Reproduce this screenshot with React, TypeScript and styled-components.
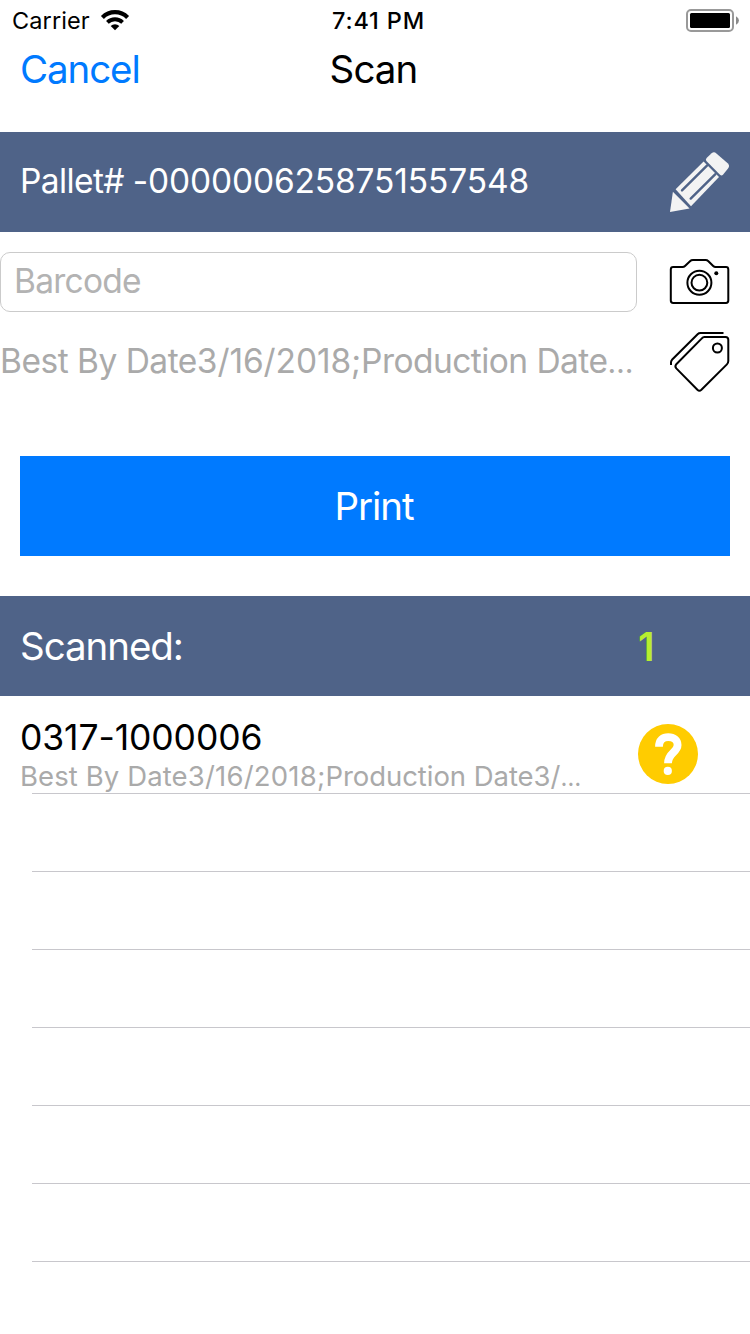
import React from "react";
import styled, { createGlobalStyle } from "styled-components";

const GlobalStyle = createGlobalStyle`
  * { box-sizing: border-box; }
  body {
    margin: 0;
    background: #fff;
    font-family: Inter, "Liberation Sans", sans-serif;
    color: #000;
  }
`;

const Screen = styled.main`
  width: 750px;
  height: 1334px;
  display: flex;
  flex-direction: column;
  background: #fff;
  overflow: hidden;
`;

const Label = styled.span<{ $size?: number; $track?: number; $color?: string; $weight?: number }>`
  font-size: ${(p) => (p.$size ? `${p.$size}px` : "inherit")};
  letter-spacing: ${(p) => p.$track ?? 0}px;
  color: ${(p) => p.$color ?? "inherit"};
  font-weight: ${(p) => p.$weight ?? 400};
  white-space: nowrap;
`;

const StatusBar = styled.header`
  display: grid;
  grid-template-columns: 1fr auto 1fr;
  align-items: center;
  height: 40px;
  padding: 1px 10px 0 12px;
  line-height: 38px;
`;

const StatusLeft = styled.div`
  display: flex;
  align-items: center;
  gap: 10px;
`;

const StatusTime = styled.div`
  padding: 2px 0 0 5px;
  line-height: 36px;
`;

const StatusRight = styled.div`
  display: flex;
  justify-content: flex-end;
`;

const NavBar = styled.nav`
  display: grid;
  grid-template-columns: 1fr auto 1fr;
  align-items: start;
  height: 92px;
  padding: 0 23px 0 20px;
  line-height: 58px;
`;

const NavButton = styled.button`
  padding: 0;
  border: 0;
  background: none;
  font: inherit;
  line-height: inherit;
  color: #007aff;
  text-align: left;
`;

const Band = styled.section`
  display: flex;
  flex: none;
  align-items: center;
  justify-content: space-between;
  height: 100px;
  padding: 0 20px;
  background: #4f6388;
  color: #fff;
`;

const PalletText = styled.div`
  padding-bottom: 2px;
`;

const Form = styled.section`
  display: flex;
  flex-direction: column;
  gap: 20px;
  padding-top: 20px;
`;

const FormRow = styled.div`
  display: flex;
  align-items: center;
  justify-content: space-between;
  height: 60px;
  padding-right: 19px;
`;

const Field = styled.div`
  width: 637px;
  height: 60px;
  padding: 0 13px;
  border: 1px solid #cbcbcb;
  border-radius: 10px;
  line-height: 56px;
`;

const LotText = styled.div`
  width: 637px;
  line-height: 58px;
  height: 60px;
`;

const PrintButton = styled.button`
  flex: none;
  height: 100px;
  margin: 64px 20px 40px;
  padding: 0 2px 0 0;
  border: 0;
  background: #007aff;
  color: #fff;
  font: inherit;
`;

const Count = styled.div`
  width: 92px;
`;

const List = styled.ul`
  margin: 20px 0 0;
  padding: 0;
  list-style: none;
`;

const Row = styled.li`
  position: relative;
  display: flex;
  justify-content: space-between;
  height: 78px;
  padding: 0 52px 0 20px;
  &::after {
    content: "";
    position: absolute;
    left: 32px;
    right: 0;
    bottom: 0;
    height: 1px;
    background: #c8c7cc;
  }
`;

const RowText = styled.div`
  display: grid;
  grid-template-rows: 44px 34px;
  & > :first-child { line-height: 44px; }
  & > :last-child { line-height: 32px; }
`;

const RowIcon = styled.div`
  padding-top: 8px;
  line-height: 0;
`;

const Wifi = () => (
  <svg width="30" height="24" viewBox="0 1 30 24" fill="none" stroke="#000">
    <path d="M2.4 9.4A17.8 17.8 0 0 1 27.6 9.4" strokeWidth="4.2" />
    <path d="M7.4 14.4A10.8 10.8 0 0 1 22.6 14.4" strokeWidth="3.8" />
    <path d="M10.7 18A6 6 0 0 1 19.3 18L15 22.2Z" fill="#000" stroke="none" />
  </svg>
);

const Battery = () => (
  <svg width="54" height="24" viewBox="0 0 54 24">
    <rect x="1" y="1" width="46" height="21" rx="4" fill="none" stroke="#999" strokeWidth="2" />
    <rect x="4" y="4" width="40" height="15" rx="1.5" />
    <path d="M50 7.2Q53 9 53 11.5Q53 14 50 15.8Z" fill="#8a8a8a" />
  </svg>
);

const Pencil = () => (
  <svg width="61" height="62" viewBox="0 0 61 62">
    <path
      d="M37.6 7L42.6 2.3Q45 .4 47.4 2.4L58.7 12.2Q61 14.5 59.4 17L54 23.7Q52.5 25.2 51 23.7L37.4 10Q36.2 8.6 37.6 7Z"
      fill="#f3f3f3"
    />
    <path d="M34.6 10.6L50 26.1L22 55.2L6.6 38.2Z" fill="#f3f3f3" />
    <path d="M38.2 14.4L13 39.4M46.4 23.2L21.7 47.6" stroke="#4f6388" strokeWidth="2.4" strokeLinecap="round" />
    <path d="M3.9 40.8L20.6 57.4L1 61Z" fill="#f3f3f3" />
  </svg>
);

const Camera = () => (
  <svg width="62" height="48" viewBox="0 0 62 48" fill="none" stroke="#000" strokeWidth="2">
    <path
      d="M4.2 9H13.5Q15 9 16 8L21 3.2Q22.2 2 24 2H36.5Q38.2 2 39.4 3.2L44.2 8Q45.2 9 46.6 9H57Q59.3 9 59.3 11.4V42.6Q59.3 45 57 45H4.2Q1.8 45 1.8 42.6V11.4Q1.8 9 4.2 9Z"
      strokeLinejoin="round"
    />
    <circle cx="30.4" cy="24.7" r="12" />
    <circle cx="30.4" cy="24.7" r="7.9" />
    <circle cx="47.3" cy="15.2" r="2" fill="#000" stroke="none" />
  </svg>
);

const Tag = () => (
  <svg width="62" height="64" viewBox="0 0 62 64" fill="none" stroke="#000" strokeWidth="2">
    <path
      d="M35.4 7H56.5Q59.3 7 59.3 9.8V31Q59.3 33 57.9 34.4L32.4 59.8Q30.4 61.6 28.4 59.8L7.3 38.4Q5.5 36.3 7.3 34.2L32.6 8.6Q34 7 35.4 7Z"
      strokeLinejoin="round"
    />
    <path d="M54.5 3H31.6Q29.8 3 28.6 4.2L3 29.8Q2 31 2 32.6V35" />
    <circle cx="48.4" cy="18" r="4.5" />
  </svg>
);

const Question = () => (
  <svg width="60" height="60" viewBox="0 0 60 60">
    <circle cx="30" cy="30" r="30" fill="#fc0" />
    <path
      d="M21 22.8C21 16 25 13.2 30.3 13.2C35.8 13.2 39.6 16 39.6 21C39.6 28.5 30 28.5 30 39.2"
      fill="none"
      stroke="#fff"
      strokeWidth="7.8"
    />
    <circle cx="29.8" cy="46.9" r="4.1" fill="#fff" />
  </svg>
);

const items = [{ code: "0317-1000006", lot: ["Best By Date", "3/16/2018;", "Production Date3/", "…"] }];
const emptyRows = 6;

export default function App() {
  return (
    <Screen>
      <GlobalStyle />
      <StatusBar>
        <StatusLeft>
          <Label $size={23.5} $track={0.1}>Carrier</Label>
          <Wifi />
        </StatusLeft>
        <StatusTime>
          <Label $size={23.5} $weight={500} $track={0.85}>7:41 PM</Label>
        </StatusTime>
        <StatusRight>
          <Battery />
        </StatusRight>
      </StatusBar>
      <NavBar>
        <NavButton>
          <Label $size={38.5} $track={-1.1}>Cancel</Label>
        </NavButton>
        <Label $size={38.5} $track={-0.9}>Scan</Label>
      </NavBar>
      <Band>
        <PalletText>
          <Label $size={33.5}>
            <Label $track={-0.6}>Pallet# </Label>
            <Label $track={-0.15}>-0000006258751557548</Label>
          </Label>
        </PalletText>
        <Pencil />
      </Band>
      <Form>
        <FormRow>
          <Field>
            <Label $size={33.5} $track={-0.75} $color="#b3b3b3">Barcode</Label>
          </Field>
          <Camera />
        </FormRow>
        <FormRow>
          <LotText>
            <Label $size={33.5} $color="#aaa">
              <Label $track={-0.5}>Best By Date</Label>
              <Label $track={-0.1}>3/16/2018;</Label>
              <Label $track={-0.55}>Production Date</Label>
              <Label $size={30}>…</Label>
            </Label>
          </LotText>
          <Tag />
        </FormRow>
      </Form>
      <PrintButton>
        <Label $size={38.5} $track={-1.1}>Print</Label>
      </PrintButton>
      <Band>
        <Label $size={38.5} $track={-1.05}>Scanned:</Label>
        <Count>
          <Label $size={39} $weight={600} $color="#b8ee30">1</Label>
        </Count>
      </Band>
      <List>
        {items.map((item) => (
          <Row key={item.code}>
            <RowText>
              <Label $size={35.5} $track={-0.1}>{item.code}</Label>
              <Label $size={27.5} $color="#aaa">
                <Label $track={0.1}>{item.lot[0]}</Label>
                <Label $track={0.2}>{item.lot[1]}</Label>
                <Label $track={-0.05}>{item.lot[2]}</Label>
                <Label $size={24}>{item.lot[3]}</Label>
              </Label>
            </RowText>
            <RowIcon>
              <Question />
            </RowIcon>
          </Row>
        ))}
        {Array.from({ length: emptyRows }, (_, i) => (
          <Row key={i} />
        ))}
      </List>
    </Screen>
  );
}
